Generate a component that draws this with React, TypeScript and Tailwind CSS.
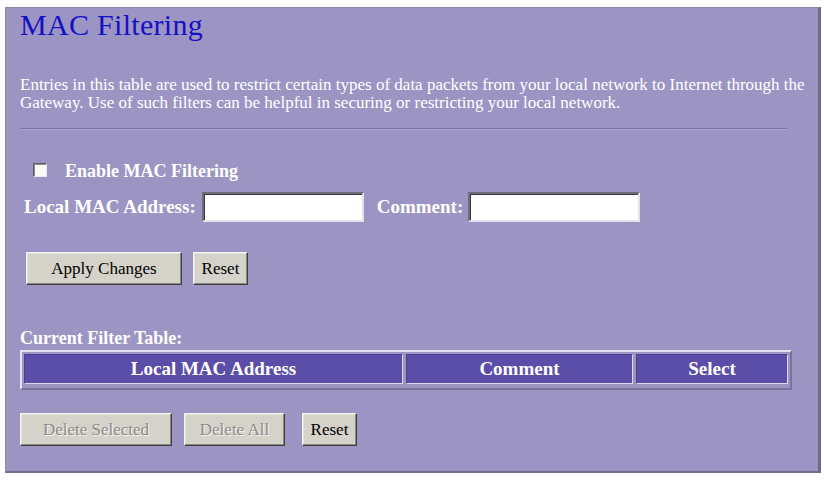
import React from "react";

const serif = { fontFamily: '"Liberation Serif", "Times New Roman", serif' };

function Btn({
  label,
  width,
  disabled = false,
}: {
  label: string;
  width: string;
  disabled?: boolean;
}) {
  return (
    <button
      type="button"
      disabled={disabled}
      className={`${width} h-[33px] bg-[#d5d2ca] border border-t-[#f4f3ef] border-l-[#f4f3ef] border-r-[#3e3e3e] border-b-[#3e3e3e] shadow-[inset_-1px_-1px_#8a8880,inset_1px_1px_#e6e4de] text-[17px] leading-[20px] ${
        disabled
          ? "text-[#8d8b86] [text-shadow:1px_1px_0_#f5f5f5]"
          : "text-black"
      }`}
      style={serif}
    >
      {label}
    </button>
  );
}

function TextBox({ width }: { width: string }) {
  return (
    <input
      type="text"
      className={`${width} h-[30px] bg-white border-2 border-t-[#6f6c78] border-l-[#6f6c78] border-r-[#e2e0ea] border-b-[#e2e0ea] shadow-[inset_1px_1px_#3a3840] outline-none`}
    />
  );
}

function HeadCell({ label, width }: { label: string; width: string }) {
  return (
    <div
      className={`${width} h-[30px] bg-[#5b4ea8] border border-t-[#4a3f8c] border-l-[#4a3f8c] border-r-[#dcd8ee] border-b-[#dcd8ee] flex items-center justify-center text-white font-bold text-[19px]`}
    >
      {label}
    </div>
  );
}

export default function App() {
  return (
    <div className="w-[826px] h-[481px] bg-white pt-[7px] pl-[5px]" style={serif}>
      <div className="w-[816px] h-[466px] bg-[#9c95c4] border-l border-t border-[#8c86ae] border-r-[3px] border-r-[#6e6987] border-b-[2px] border-b-[#75708e] pl-[14px] pt-[2px]">
        <h1 className="text-[30px] leading-[30px] text-[#1610c4] font-normal tracking-[0.3px]">
          MAC Filtering
        </h1>

        <p className="mt-[36px] text-[17px] leading-[18px] text-white whitespace-nowrap">
          Entries in this table are used to restrict certain types of data packets from your local network to Internet through the
          <br />
          Gateway. Use of such filters can be helpful in securing or restricting your local network.
        </p>

        <div className="mt-[16px] w-[767px] h-[2px] border-t border-t-[#7c76a2] border-b border-b-[#aaa4cc]" />

        <div className="mt-[31px] flex items-start text-white font-bold text-[18px] leading-[20px]">
          <span className="ml-[13px] mt-[2px] w-[14px] h-[14px] bg-[#fbfbf8] border border-t-[#5c5a62] border-l-[#5c5a62] border-r-[#e8e6ee] border-b-[#e8e6ee] shadow-[inset_1px_1px_#8e8c94]" />
          <span className="ml-[18px]">Enable MAC Filtering</span>
        </div>

        <div className="mt-[11px] flex items-center text-white font-bold text-[19px] leading-[20px]">
          <span className="ml-[4px] mr-[6px]">Local MAC Address:</span>
          <TextBox width="w-[162px]" />
          <span className="ml-[13px] mr-[5px]">Comment:</span>
          <TextBox width="w-[172px]" />
        </div>

        <div className="mt-[30px] ml-[6px] flex gap-[11px]">
          <Btn label="Apply Changes" width="w-[156px]" />
          <Btn label="Reset" width="w-[55px]" />
        </div>

        <div className="mt-[43px] text-white font-bold text-[18px] leading-[20px]">
          Current Filter Table:
        </div>

        <div className="mt-[2px] w-[772px] h-[40px] border-2 border-t-[#e4e1f2] border-l-[#e4e1f2] border-r-[#7a7499] border-b-[#7a7499] p-[2px] flex gap-[3px]">
          <HeadCell label="Local MAC Address" width="w-[379px]" />
          <HeadCell label="Comment" width="w-[227px]" />
          <HeadCell label="Select" width="w-[152px]" />
        </div>

        <div className="mt-[23px] flex">
          <Btn label="Delete Selected" width="w-[152px]" disabled />
          <div className="ml-[12px]">
            <Btn label="Delete All" width="w-[101px]" disabled />
          </div>
          <div className="ml-[17px]">
            <Btn label="Reset" width="w-[55px]" />
          </div>
        </div>
      </div>
    </div>
  );
}
